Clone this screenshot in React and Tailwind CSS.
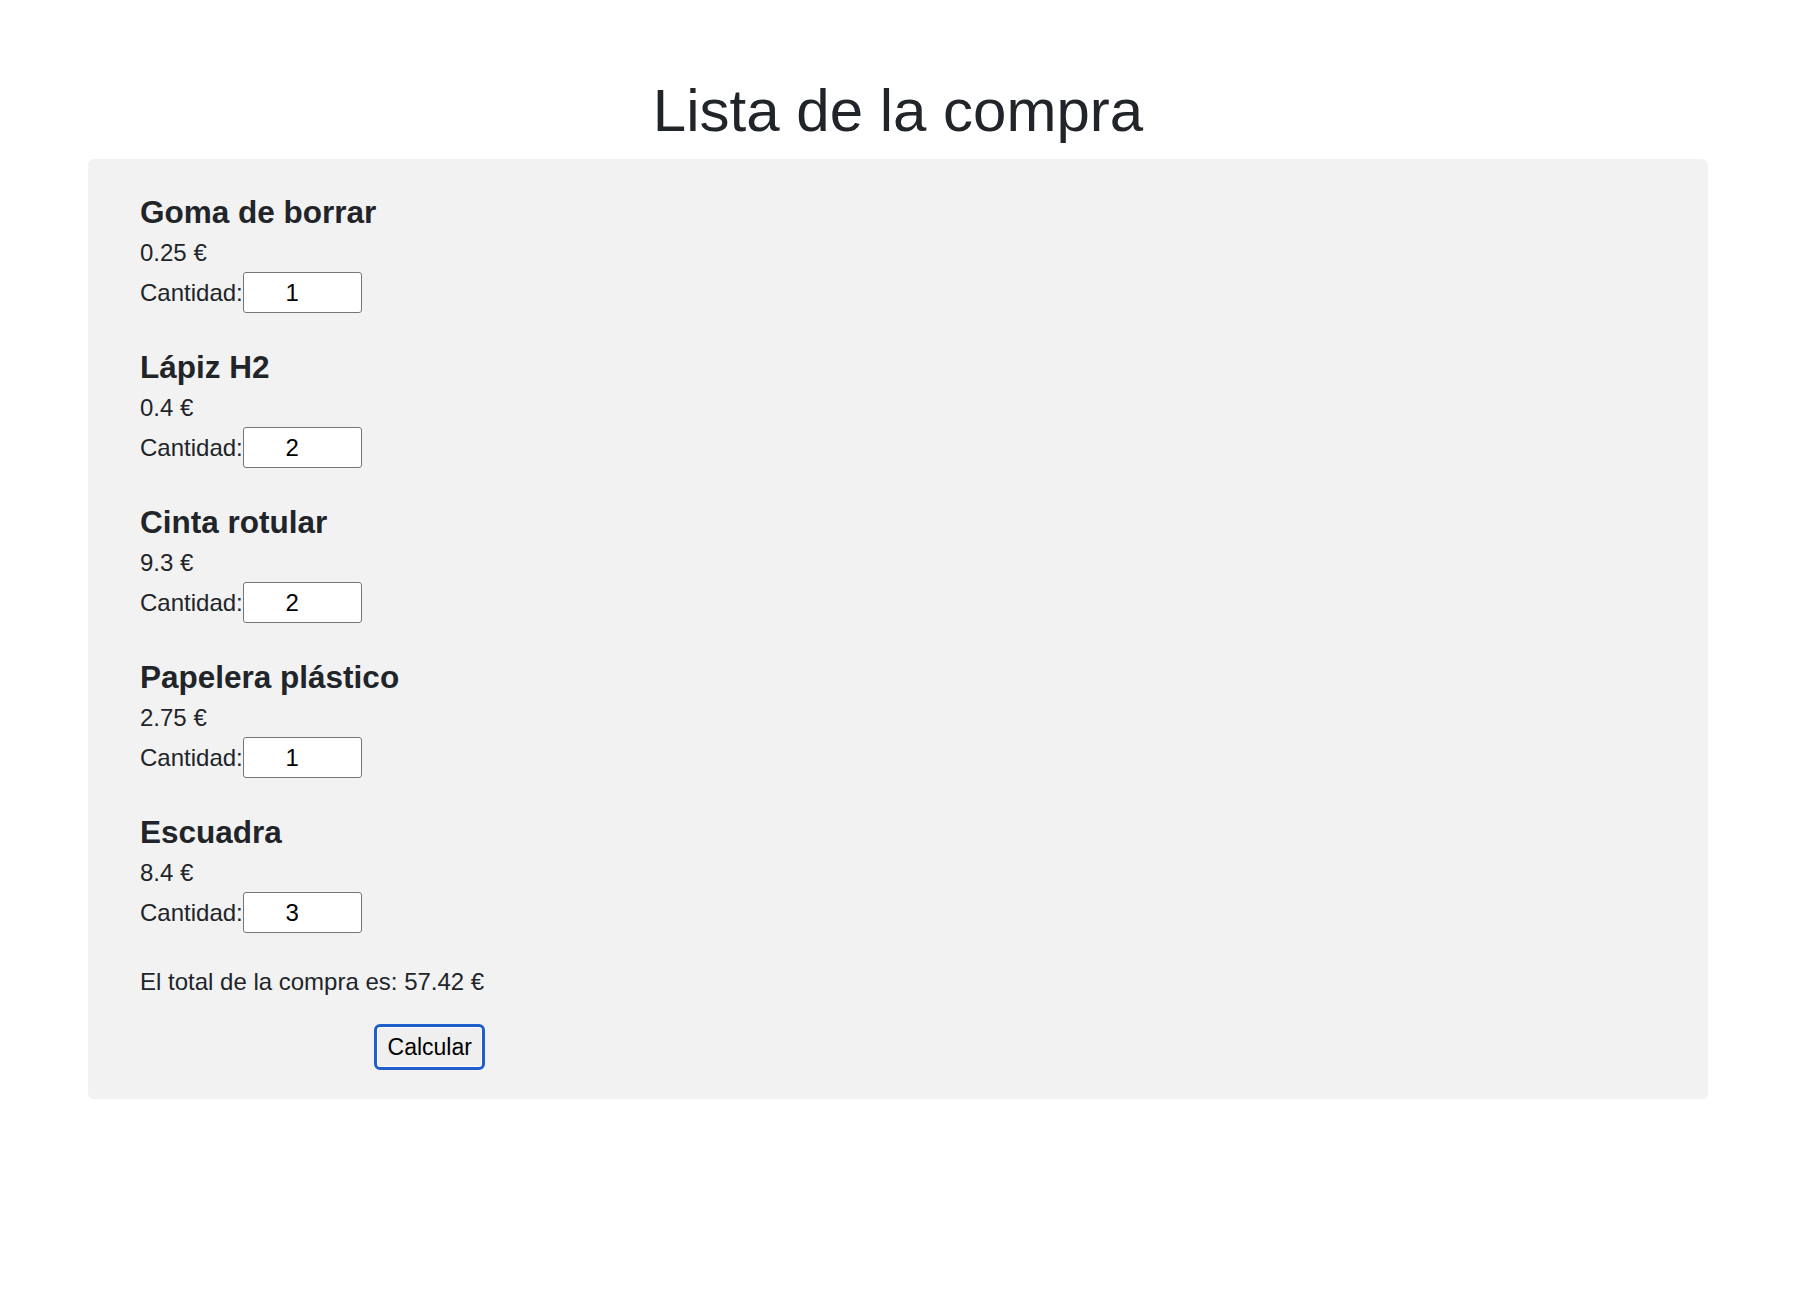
import React from 'react';

const items = [
    { name: 'Goma de borrar', price: '0.25', qty: 1 },
    { name: 'Lápiz H2', price: '0.4', qty: 2 },
    { name: 'Cinta rotular', price: '9.3', qty: 2 },
    { name: 'Papelera plástico', price: '2.75', qty: 1 },
    { name: 'Escuadra', price: '8.4', qty: 3 },
];

const Item = ({ name, price, qty }) => (
    <div className="flex flex-col">
        <h3 className="text-[31.5px] font-bold leading-[36px] mb-[5px]">{name}</h3>
        <p className="text-[24px] leading-[36px]">{price} €</p>
        <div className="mt-[1px] flex items-center">
            <label className="text-[24px] leading-[36px]">Cantidad:</label>
            <input
                type="text"
                defaultValue={qty}
                className="h-[41px] w-[119px] rounded-[3px] border border-[#767676] bg-white pl-[2px] pr-[22px] text-center text-[24px] text-black outline-none"
            />
        </div>
    </div>
);

export default function App() {
    return (
        <div className="min-h-screen bg-white font-['Liberation_Sans',Arial,sans-serif] text-[#212529]">
            <h1 className="pt-[75px] mb-[12px] text-center text-[60px] leading-[72px]">
                Lista de la compra
            </h1>

            <div className="mx-[88px] rounded-md bg-[#f2f2f2] pl-[52px] pt-[35px] pb-[29px]">
                <div className="flex flex-col gap-[36px]">
                    {items.map((item) => (
                        <Item key={item.name} {...item} />
                    ))}
                </div>

                {/* Total + button */}
                <div className="mt-[31px] flex w-fit flex-col items-end">
                    <p className="text-[24px] leading-[36px]">El total de la compra es: 57.42 €</p>
                    <button className="mt-[24px] mr-[-1px] h-[46px] w-[111px] rounded-[6px] border-[3px] border-[#1f5fcc] bg-[#efefef] text-center text-[23px] text-black shadow-[inset_0_0_0_1px_#ffffff]">
                        Calcular
                    </button>
                </div>
            </div>
        </div>
    );
}
